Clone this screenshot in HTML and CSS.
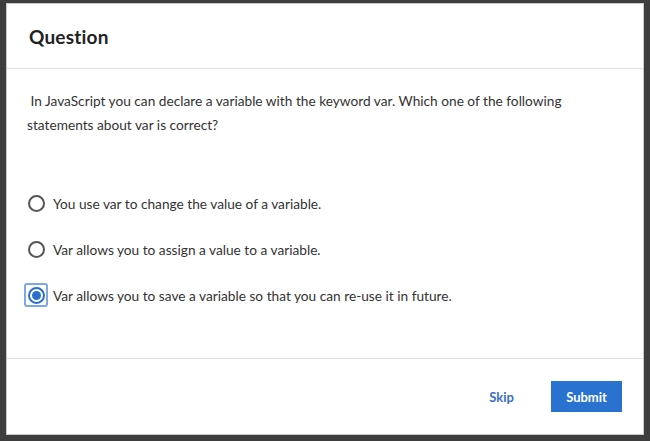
FILE: index.html
```html
<!DOCTYPE html>
<html>
<head>
<meta charset="utf-8">
<link rel="stylesheet" href="styles.css">
</head>
<body>
<div class="modal">
  <div class="modal-header">
    <h2 class="title">Question</h2>
  </div>
  <div class="modal-body">
    <p class="question">&nbsp;In JavaScript you can declare a variable with the keyword var. Which one of the following statements about var is correct?</p>
    <div class="options">
      <label class="option">
        <span class="radio-wrap"><span class="radio"></span></span>
        <span class="option-text">You use var to change the value of a variable.</span>
      </label>
      <label class="option">
        <span class="radio-wrap"><span class="radio"></span></span>
        <span class="option-text">Var allows you to assign a value to a variable.</span>
      </label>
      <label class="option">
        <span class="radio-wrap focused"><span class="radio checked"></span></span>
        <span class="option-text">Var allows you to save a variable so that you can re-use it in future.</span>
      </label>
    </div>
  </div>
  <div class="modal-footer">
    <button class="btn-skip">Skip</button>
    <button class="btn-submit">Submit</button>
  </div>
</div>
</body>
</html>
```

FILE: styles.css
```css
html, body {
  margin: 0;
  padding: 0;
}
body {
  background: #3e3e3e;
  width: 650px;
  height: 441px;
  overflow: hidden;
  font-family: Lato, "Liberation Sans", sans-serif;
  color: #333;
}
.modal {
  margin: 3px 6px 0 6px;
  height: 430px;
  background: #fff;
  border: 1px solid #c8c8c8;
  display: flex;
  flex-direction: column;
}
.modal-header {
  height: 65px;
  border-bottom: 1px solid #e1e1e1;
  display: flex;
  align-items: center;
  padding-left: 22px;
  box-sizing: border-box;
}
.title {
  margin: 0;
  font-size: 19px;
  font-weight: 700;
  color: #222;
  letter-spacing: 0.2px;
}
.modal-body {
  flex: 1;
  padding: 20px 20px 0 17px;
  border-bottom: 1px solid #e1e1e1;
}
.question {
  margin: 0;
  padding-left: 3px;
  font-size: 13.7px;
  line-height: 24px;
  color: #333;
  width: 560px;
}
.options {
  margin-top: 54px;
  display: flex;
  flex-direction: column;
  gap: 22px;
}
.option {
  display: flex;
  align-items: center;
  gap: 5px;
  font-size: 13.7px;
  color: #333;
}
.radio-wrap {
  width: 24px;
  height: 24px;
  box-sizing: border-box;
  display: flex;
  align-items: center;
  justify-content: center;
  border-radius: 3px;
  border: 2px solid transparent;
}
.radio-wrap.focused {
  border-color: #7ea8e4;
}
.radio {
  width: 17px;
  height: 17px;
  box-sizing: border-box;
  border: 2px solid #555;
  border-radius: 50%;
  display: flex;
  align-items: center;
  justify-content: center;
}
.radio.checked {
  border-color: #2a6fcc;
}
.radio.checked::after {
  content: "";
  width: 9px;
  height: 9px;
  border-radius: 50%;
  background: #2a6fcc;
}
.modal-footer {
  height: 75px;
  display: flex;
  align-items: center;
  justify-content: flex-end;
  padding-right: 21px;
  gap: 21px;
}
button {
  font-family: inherit;
  font-size: 13px;
  font-weight: 700;
  border: none;
  cursor: pointer;
}
.btn-skip {
  background: none;
  color: #3b6fc6;
  padding: 0 16px;
  height: 31px;
}
.btn-submit {
  background: #2a72cf;
  color: #fff;
  width: 71px;
  height: 31px;
  padding: 0;
}
```
